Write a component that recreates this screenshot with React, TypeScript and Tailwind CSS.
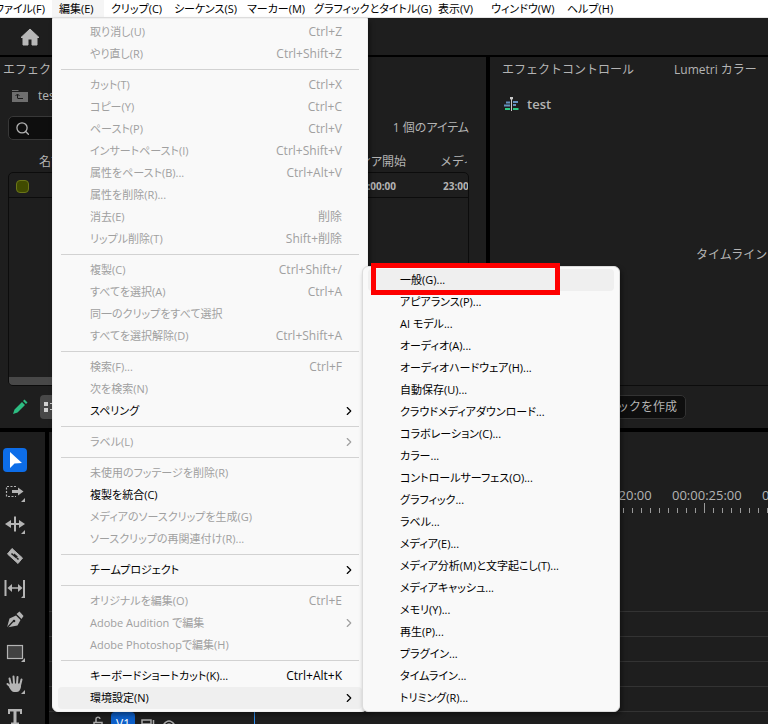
import { ReactNode } from "react";
import { ChevronRight, Search } from "lucide-react";

type MenuItem = {
  label: string;
  shortcut?: string;
  enabled?: boolean;
  submenu?: boolean;
  active?: boolean;
};

const menuBar = [
  "ファイル(F)",
  "編集(E)",
  "クリップ(C)",
  "シーケンス(S)",
  "マーカー(M)",
  "グラフィックとタイトル(G)",
  "表示(V)",
  "ウィンドウ(W)",
  "ヘルプ(H)",
];

const editMenu: MenuItem[][] = [
  [
    { label: "取り消し(U)", shortcut: "Ctrl+Z" },
    { label: "やり直し(R)", shortcut: "Ctrl+Shift+Z" },
  ],
  [
    { label: "カット(T)", shortcut: "Ctrl+X" },
    { label: "コピー(Y)", shortcut: "Ctrl+C" },
    { label: "ペースト(P)", shortcut: "Ctrl+V" },
    { label: "インサートペースト(I)", shortcut: "Ctrl+Shift+V" },
    { label: "属性をペースト(B)...", shortcut: "Ctrl+Alt+V" },
    { label: "属性を削除(R)..." },
    { label: "消去(E)", shortcut: "削除" },
    { label: "リップル削除(T)", shortcut: "Shift+削除" },
  ],
  [
    { label: "複製(C)", shortcut: "Ctrl+Shift+/" },
    { label: "すべてを選択(A)", shortcut: "Ctrl+A" },
    { label: "同一のクリップをすべて選択" },
    { label: "すべてを選択解除(D)", shortcut: "Ctrl+Shift+A" },
  ],
  [
    { label: "検索(F)...", shortcut: "Ctrl+F" },
    { label: "次を検索(N)" },
    { label: "スペリング", enabled: true, submenu: true },
  ],
  [{ label: "ラベル(L)", submenu: true }],
  [
    { label: "未使用のフッテージを削除(R)" },
    { label: "複製を統合(C)", enabled: true },
    { label: "メディアのソースクリップを生成(G)" },
    { label: "ソースクリップの再関連付け(R)..." },
  ],
  [{ label: "チームプロジェクト", enabled: true, submenu: true }],
  [
    { label: "オリジナルを編集(O)", shortcut: "Ctrl+E" },
    { label: "Adobe Audition で編集", submenu: true },
    { label: "Adobe Photoshopで編集(H)" },
  ],
  [
    { label: "キーボードショートカット(K)...", shortcut: "Ctrl+Alt+K", enabled: true },
    { label: "環境設定(N)", enabled: true, submenu: true, active: true },
  ],
];

const preferences = [
  "一般(G)...",
  "アピアランス(P)...",
  "AI モデル...",
  "オーディオ(A)...",
  "オーディオハードウェア(H)...",
  "自動保存(U)...",
  "クラウドメディアダウンロード...",
  "コラボレーション(C)...",
  "カラー...",
  "コントロールサーフェス(O)...",
  "グラフィック...",
  "ラベル...",
  "メディア(E)...",
  "メディア分析(M)と文字起こし(T)...",
  "メディアキャッシュ...",
  "メモリ(Y)...",
  "再生(P)...",
  "プラグイン...",
  "タイムライン...",
  "トリミング(R)...",
];

const tools: { name: string; icon: ReactNode; more?: boolean; active?: boolean }[] = [
  { name: "選択", active: true, icon: <path d="M7 4v16l4.500-4.500L19 15z" fill="#fff" stroke="none" /> },
  {
    name: "トラックの前方選択",
    more: true,
    icon: (
      <>
        <path d="M13 6.500H3.500v10H13" strokeWidth="1.200" strokeDasharray="2 1.500" fill="none" />
        <path d="M9 10h6V7.500l5.500 4-5.500 4V13H9z" stroke="none" />
      </>
    ),
  },
  {
    name: "リップル",
    more: true,
    icon: <path d="M11 4.500h2V11h3V8l6 4-6 4v-3h-3v6.500h-2V13H8v3l-6-4 6-4v3h3z" stroke="none" />,
  },
  {
    name: "レーザー",
    icon: (
      <>
        <path d="M9 4.500 19.500 14 15 19.500 4.500 10z" strokeWidth="1" />
        <path d="M8.500 9.500 10 11M14 14l1.500 1.500" stroke="#1e1e1e" strokeWidth="1.500" />
        <path d="m10.500 10.500 3.500 3" stroke="#1e1e1e" strokeWidth="2.500" />
      </>
    ),
  },
  {
    name: "スリップ",
    more: true,
    icon: (
      <>
        <path d="M2.500 4v16M21 4v16" strokeWidth="2" />
        <path d="M6 12h12" strokeWidth="1.500" />
        <path d="M9 8v8l-4.500-4zM15 8v8l4.500-4z" stroke="none" />
      </>
    ),
  },
  {
    name: "ペン",
    icon: (
      <>
        <path d="m4 19.500 2.500-9L13 7.500l4.500 4.500-3 5.500z" stroke="none" />
        <path d="m13.500 6 3-2.500L20.500 8l-2 3z" stroke="none" />
        <path d="m4 20 6-6.500" stroke="#1e1e1e" strokeWidth="1.200" />
        <circle cx="11" cy="13" r="1.300" fill="#1e1e1e" stroke="none" />
      </>
    ),
  },
  { name: "長方形", more: true, icon: <rect x="4.500" y="5.500" width="15" height="13" fill="#424242" strokeWidth="1.200" /> },
  {
    name: "手のひら",
    more: true,
    icon: (
      <>
        <path d="M8 13 6.500 6.500M11 12l-.5-7.500M14 12l.5-7M17 13.500l1.500-6M9 16l-4.500-4" strokeWidth="2" strokeLinecap="round" />
        <path d="M7 11.500h11v3.500q-1 5-4.500 5H11q-2.500 0-5-5z" stroke="none" />
      </>
    ),
  },
  { name: "文字", icon: <path d="M5 5h14v5h-2V7.500h-3.500v11H16v2H8v-2h2.500v-11H7V10H5z" stroke="none" /> },
];

const ticks = Array.from({ length: 17 }, (_, i) => i);

function MenuRow({ item }: { item: MenuItem }) {
  return (
    <button
      type="button"
      role="menuitem"
      disabled={!item.enabled}
      className={`flex h-[22px] w-full items-center justify-between rounded pl-8 text-left ${
        item.enabled ? "text-black" : "text-[#a0a0a0]"
      } ${item.active ? "bg-[#efefef]" : ""} ${item.submenu ? "pr-1.5" : "pr-5"}`}
    >
      <span className="text-[11px]">{item.label}</span>
      {item.shortcut && <span>{item.shortcut}</span>}
      {item.submenu && <ChevronRight size={14} strokeWidth={2} />}
    </button>
  );
}

function EditMenu() {
  return (
    <div
      role="menu"
      aria-label="編集"
      className="absolute top-[18px] left-[52px] w-[316px] rounded-b-md border border-[#f0f0f0] bg-[#f9f9f9] px-[5px] py-0.5 shadow-[2px_3px_5px_rgba(0,0,0,0.4)] [font-feature-settings:'palt']"
    >
      {editMenu.map((group, i) => (
        <div key={i}>
          {i > 0 && <hr className="mx-[3px] my-1 border-[#d2d2d2]" />}
          {group.map((item) => (
            <MenuRow key={item.label} item={item} />
          ))}
        </div>
      ))}
    </div>
  );
}

function PreferencesMenu() {
  return (
    <div
      role="menu"
      aria-label="環境設定"
      className="absolute top-[266px] left-[362px] w-[258px] rounded-md border border-[#dcdcdc] bg-[#f9f9f9] px-[5px] py-0.5 shadow-[2px_3px_5px_rgba(0,0,0,0.4)] [font-feature-settings:'palt']"
    >
      {preferences.map((label, i) => (
        <button
          key={label}
          type="button"
          role="menuitem"
          className={`flex h-[22px] w-full items-center rounded pl-8 text-left text-[11px] text-black ${i === 0 ? "bg-[#efefef]" : ""}`}
        >
          {label}
        </button>
      ))}
      {/* highlight frame around the first entry */}
      <div className="pointer-events-none absolute -top-1 left-2 h-8 w-[189px] border-[5px] border-[#fe0000]" />
    </div>
  );
}

function ProjectPanel() {
  return (
    <section className="flex w-[486px] shrink-0 flex-col bg-[#1e1e1e] pr-[17px] pl-2">
      <div className="-ml-[5px] flex h-6 items-center pt-0.5">エフェクト</div>
      <div className="flex h-[30px] items-center gap-2.5 pl-1">
        <svg width="16" height="12" viewBox="0 0 16 12">
          <path d="M0 0h6l1 1H0zM0 2h16v10H0z" fill="#6e6e6e" />
          <path d="M5.500 8V4.500M3.500 6l2-2 2 2M5.500 8.500H11" stroke="#1a1a1a" fill="none" />
        </svg>
        <span>test.prproj</span>
      </div>
      <div className="mt-[5px] flex h-6 items-center justify-between">
        <div className="flex h-6 w-60 items-center gap-2 rounded-[5px] border border-[#383838] bg-[#0e0e0e] pl-1.5">
          <Search size={17} strokeWidth={2} />
          <input aria-label="検索" className="w-full bg-transparent outline-none" />
        </div>
        <span className="[font-feature-settings:'palt']">1 個のアイテム</span>
      </div>
      <table className="mt-3 block">
        <thead className="block">
          <tr className="flex h-5 items-center overflow-hidden whitespace-nowrap">
            <th className="w-[315px] pl-[31px] text-left font-normal">名前</th>
            <th className="w-[83px] text-right font-normal [font-feature-settings:'palt']">メディア開始</th>
            <th className="ml-[34px] w-[27px] overflow-hidden text-left font-normal">メディア終了</th>
          </tr>
        </thead>
        <tbody className="block h-[214px] rounded-[5px] border border-[#0c0c0c]">
          <tr className="flex h-[25px] items-center border-b border-[#0c0c0c] pt-0.5 text-[10px] font-bold">
            <td className="w-[315px] pl-[7px]">
              <span className="block h-[13px] w-[13px] rounded-sm border border-[#6b7618] bg-[#414b00]" />
            </td>
            <td className="w-[72px] text-right">00:00:00</td>
            <td className="ml-[47px] w-[25px] overflow-hidden">23:00:00</td>
          </tr>
          <tr className="mt-[179px] block h-2 rounded-b bg-[#484848]" />
        </tbody>
      </table>
      <div className="mt-[9px] flex h-6 items-center gap-3 pl-1">
        <svg width="16" height="16" viewBox="0 0 16 16">
          <path d="m1 15 1.500-4.500L10 3l3 3-7.500 7.500zM11 2l1.500-1.500 3 3L14 5z" fill="#2dbd82" />
        </svg>
        <button type="button" aria-label="リスト表示" className="flex h-6 w-6 items-center justify-center rounded bg-[#484848]">
          <svg width="16" height="12" viewBox="0 0 16 12" fill="#d0d0d0">
            <path d="M0 1h4v4H0zM0 7h4v4H0zM6 2h9v1H6zM6 8h9v1H6z" />
          </svg>
        </button>
      </div>
    </section>
  );
}

function EffectPanel() {
  return (
    <section className="flex min-w-0 flex-1 flex-col overflow-hidden bg-[#1e1e1e] whitespace-nowrap">
      <div className="flex h-6 items-center gap-10 pt-0.5 pl-3">
        <span>エフェクトコントロール</span>
        <span>Lumetri カラー</span>
      </div>
      <div className="mt-3 flex h-[22px] items-center gap-2 pl-3.5 text-[13px] font-semibold">
        <svg width="15" height="14" viewBox="0 0 15 14">
          <path d="M2 4.500h4v2H2zM0 7.500h6v2H0zM9 4h5v2H9zM9 7h3v2H9z" fill="#6590bd" />
          <path d="M1 11h5v2H1zM9 11h5.500v2H9z" fill="#2dc985" />
          <path d="M7.500 0v14" stroke="#c8c8c8" />
          <path d="M6 0h3v2L7.500 3 6 2z" fill="#c8c8c8" />
        </svg>
        <span>test</span>
      </div>
      <div className="flex flex-1 items-start border-b border-[#0c0c0c] pt-[132px] pl-[206px]">タイムラインで</div>
      <div className="flex h-[42px] items-center pl-20">
        <button type="button" className="mb-px flex h-6 w-[116px] items-center justify-end rounded-[5px] border border-[#333] bg-[#0e0e0e] pr-2">
          トラックを作成
        </button>
      </div>
    </section>
  );
}

function Toolbar() {
  return (
    <aside className="flex w-[45px] shrink-0 flex-col items-start gap-2 overflow-hidden bg-[#1e1e1e] pt-4 pl-[3px]">
      {tools.map((tool) => (
        <button
          key={tool.name}
          type="button"
          aria-label={tool.name}
          className={`flex h-6 w-6 shrink-0 items-center justify-center rounded ${tool.active ? "bg-[#0d6de8]" : ""}`}
        >
          <svg width="24" height="24" viewBox="0 0 24 24" fill="#b4b4b4" stroke="#b4b4b4">
            {tool.icon}
            {tool.more && <path d="M22 18v4h-4z" stroke="none" />}
          </svg>
        </button>
      ))}
    </aside>
  );
}

function Timeline() {
  return (
    <section className="min-w-0 flex-1 overflow-hidden bg-[#1e1e1e]">
      <div className="flex h-[71px] items-end gap-[22px] pl-[533px] text-[13px]">
        <span className="w-[68px] shrink-0">00:00:20:00</span>
        <span className="w-[68px] shrink-0">00:00:25:00</span>
        <span className="w-[68px] shrink-0">00:00:30:00</span>
      </div>
      <div className="flex h-2.5 items-end gap-2 pl-[574px]">
        {ticks.map((i) => (
          <span key={i} className={`w-px shrink-0 bg-[#9a9a9a] ${i === 9 ? "h-2.5" : "h-[5px]"}`} />
        ))}
      </div>
      <div className="mt-[98px] divide-y divide-[#333] border-y border-[#333]">
        <div className="h-[25px]" />
        <div className="h-[25px]" />
        <div className="h-[25px]" />
        <div className="h-6" />
      </div>
      <div className="flex h-6 items-start gap-1.5 pl-11">
        <svg width="12" height="14" viewBox="0 0 12 14" fill="none" stroke="#a8a8a8" strokeWidth="1.500" className="mt-1">
          <path d="M3 6V3.500a2 2 0 0 1 4-.5M1 6.500h8V13H1z" />
        </svg>
        <button type="button" className="h-6 w-6 rounded bg-[#0d5fc9] text-white">V1</button>
        <svg width="14" height="14" viewBox="0 0 14 14" fill="none" stroke="#a8a8a8" strokeWidth="1.500" className="mt-1.5">
          <path d="M1 2h9v4H1zM12.500 2v9M5 9h7" />
        </svg>
        <svg width="16" height="14" viewBox="0 0 16 14" fill="none" stroke="#a8a8a8" strokeWidth="1.500" className="mt-1.5">
          <path d="M1 9q7-12 14 0" />
          <circle cx="8" cy="8" r="2" />
        </svg>
        <span className="ml-[71px] h-6 w-px bg-[#2d8ceb]" />
      </div>
    </section>
  );
}

export default function App() {
  return (
    <div className="relative flex h-screen flex-col overflow-hidden bg-black font-['Open_Sans','Noto_Sans_CJK_JP',sans-serif] text-[12px] leading-4 text-[#b4b4b4]">
      <nav className="grid h-[18px] shrink-0 grid-cols-[52px_52px_63px_73px_67px_124px_53px_76px_auto] border-b border-[#e5e5e5] bg-white text-[11px] text-black [font-feature-settings:'palt']">
        {menuBar.map((label, i) => (
          <button
            key={label}
            type="button"
            className={`flex items-center px-[7px] whitespace-nowrap ${i === 0 ? "justify-end" : ""} ${i === 1 ? "bg-[#f5f5f5]" : ""}`}
          >
            {label}
          </button>
        ))}
      </nav>
      <header className="mb-0.5 flex h-[37px] shrink-0 items-center bg-[#1e1e1e] pl-5">
        <svg width="20" height="18" viewBox="0 0 20 18" fill="#b8b8b8">
          <path d="m10 1 9 8.500h-2V17h-5v-6H8v6H3V9.500H1z" stroke="#b8b8b8" strokeLinejoin="round" />
        </svg>
      </header>
      <main className="flex min-h-0 flex-1 flex-col gap-1">
        <div className="flex h-[371px] shrink-0 gap-1">
          <ProjectPanel />
          <EffectPanel />
        </div>
        <div className="flex min-h-0 flex-1 gap-1">
          <Toolbar />
          <Timeline />
        </div>
      </main>
      <EditMenu />
      <PreferencesMenu />
    </div>
  );
}
